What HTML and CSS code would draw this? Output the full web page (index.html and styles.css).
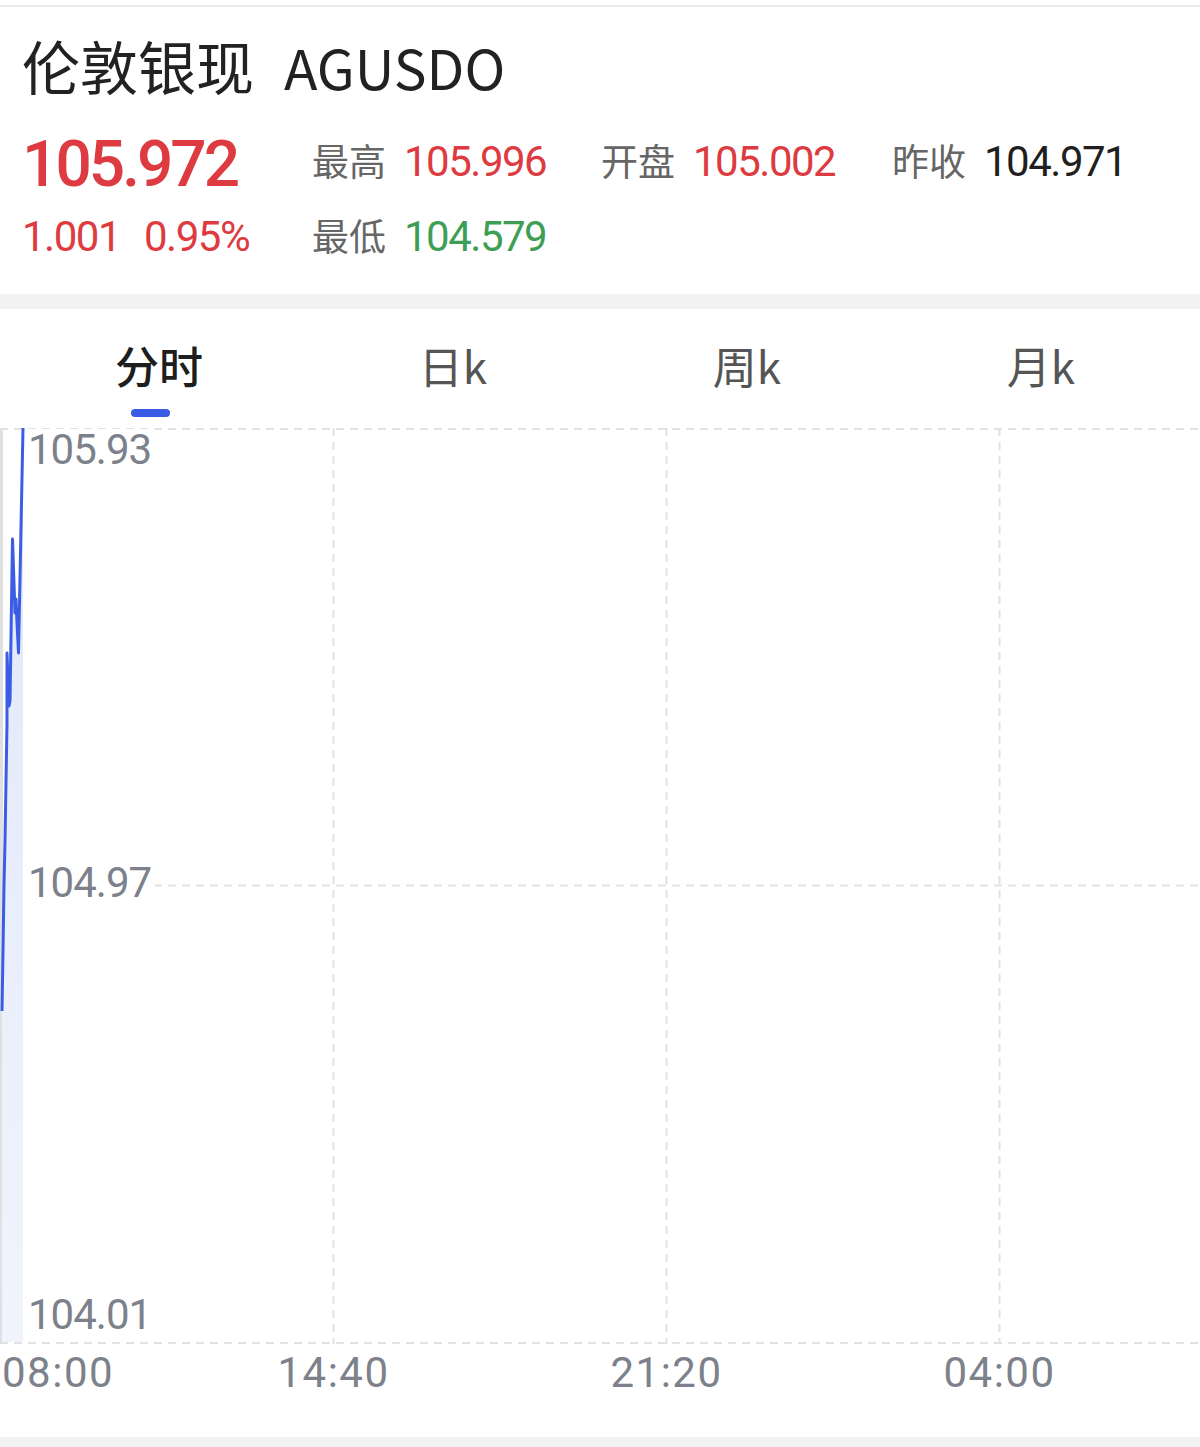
FILE: index.html
```html
<!DOCTYPE html>
<html lang="zh-CN">
<head>
<meta charset="utf-8">
<title>伦敦银现 AGUSDO</title>
<link rel="stylesheet" href="styles.css">
</head>
<body>
<div class="top-rule"></div>
<header class="quote">
  <h1 class="title"><span class="name">伦敦银现</span><span class="code">AGUSDO</span></h1>
  <div class="stats">
    <div class="price up">105.972</div>
    <div class="stat"><span class="label">最高</span><span class="val up">105.996</span></div>
    <div class="stat"><span class="label">开盘</span><span class="val up">105.002</span></div>
    <div class="stat"><span class="label">昨收</span><span class="val flat">104.971</span></div>
    <div class="change up"><span class="chg">1.001</span><span class="pct">0.95%</span></div>
    <div class="stat"><span class="label">最低</span><span class="val down">104.579</span></div>
  </div>
</header>
<div class="band"></div>
<section class="chart-card">
  <nav class="tabs">
    <div class="tab active"><span class="tab-text">分时</span><span class="tab-bar"></span></div>
    <div class="tab"><span class="tab-text">日k</span></div>
    <div class="tab"><span class="tab-text">周k</span></div>
    <div class="tab"><span class="tab-text">月k</span></div>
  </nav>
  <div class="chart">
    <svg class="chart-svg" width="1200" height="916" viewBox="0 0 1200 916" xmlns="http://www.w3.org/2000/svg">
      <defs>
        <linearGradient id="fillGrad" x1="0" y1="0" x2="0" y2="1">
          <stop offset="0" stop-color="#dfe7f9"/>
          <stop offset="1" stop-color="#f1f4fc"/>
        </linearGradient>
      </defs>
      <g stroke="#e2e2e2" stroke-width="2" stroke-dasharray="8 6" fill="none">
        <line x1="0" y1="1" x2="1200" y2="1"/>
        <line x1="0" y1="457.5" x2="1200" y2="457.5"/>
        <line x1="0" y1="915" x2="1200" y2="915"/>
        <line x1="333.5" y1="0" x2="333.5" y2="916"/>
        <line x1="666.5" y1="0" x2="666.5" y2="916"/>
        <line x1="999.5" y1="0" x2="999.5" y2="916"/>
      </g>
      <rect x="0" y="0" width="3" height="916" fill="#e0e0e0"/>
      <polygon fill="url(#fillGrad)" points="2,583 3,523 4,457 5,413 6,353 7,295 7,225 9,278 10,273 12.5,111 15,185 16,171 17,195 18.5,225 23,0 23,914 2,914"/>
      <polyline fill="none" stroke="#3b5de6" stroke-width="3" stroke-linejoin="round" points="2,583 3,523 4,457 5,413 6,353 7,295 7,225 9,278 10,273 12.5,111 15,185 16,171 17,195 18.5,225 23,0"/>
    </svg>
    <span class="ylabel y-top">105.93</span>
    <span class="ylabel y-mid">104.97</span>
    <span class="ylabel y-bot">104.01</span>
  </div>
  <div class="axis">
    <span class="tlabel t0">08:00</span>
    <span class="tlabel t1">14:40</span>
    <span class="tlabel t2">21:20</span>
    <span class="tlabel t3">04:00</span>
  </div>
</section>
<div class="band band-bottom"></div>
</body>
</html>
```

FILE: styles.css
```css
* { box-sizing: border-box; }

html, body {
  margin: 0;
  padding: 0;
  background: #ffffff;
}

body {
  width: 1200px;
  height: 1447px;
  overflow: hidden;
  font-family: "Noto Sans CJK SC", "Noto Sans", sans-serif;
  color: #222222;
}

.top-rule {
  margin-top: 5px;
  height: 2px;
  background: #ebebeb;
}

.quote {
  padding: 29px 0 17px 0;
}

.title {
  margin: 0 0 0 22px;
  font-weight: 400;
  font-size: 58px;
  line-height: 58px;
  color: #222222;
  white-space: nowrap;
}

.title .code {
  margin-left: 30px;
  font-family: "Noto Sans CJK SC", "Noto Sans", sans-serif;
  font-size: 55px;
}

.stats {
  margin-top: 32px;
  padding-left: 22px;
  display: grid;
  grid-template-columns: 290px 289px 291px 1fr;
  grid-template-rows: 75px 75px;
}

.up { color: #dd3b41; }
.down { color: #3f9e55; }
.flat { color: #1f1f1f; }

.price {
  font-family: Roboto, "Liberation Sans", sans-serif;
  font-weight: 500;
  font-size: 64px;
  line-height: 75px;
  letter-spacing: -3px;
  white-space: nowrap;
}

.stat, .change {
  padding-top: 9px;
  line-height: 66px;
  white-space: nowrap;
}

.label {
  font-family: "Noto Sans CJK SC", sans-serif;
  font-size: 37px;
  line-height: 1;
  color: #666666;
  margin-right: 18px;
}

.val, .chg, .pct {
  font-family: Roboto, "Liberation Sans", sans-serif;
  font-size: 42px;
  line-height: 1;
  letter-spacing: -1.5px;
}

.chg { margin-right: 24px; }

.band {
  height: 15px;
  background: #f2f2f2;
}

.band-bottom {
  height: 11px;
}

.chart-card {
  background: #ffffff;
}

.tabs {
  display: grid;
  grid-template-columns: repeat(4, 1fr);
  padding: 0 12px;
  height: 119px;
}

.tab {
  display: flex;
  flex-direction: column;
  align-items: center;
  padding-top: 34px;
}

.tab-text {
  font-size: 44px;
  line-height: 44px;
  color: #555555;
  white-space: nowrap;
}

.tab.active .tab-text {
  color: #1e1e1e;
  font-weight: 500;
}

.tab-bar {
  display: block;
  width: 39px;
  height: 8px;
  margin-top: 22px;
  margin-left: -18px;
  border-radius: 4px;
  background: #3a5be3;
}

.chart {
  position: relative;
  height: 916px;
}

.chart-svg {
  display: block;
}

.ylabel {
  position: absolute;
  left: 28px;
  padding-right: 4px;
  font-family: Roboto, "Liberation Sans", sans-serif;
  font-size: 42px;
  line-height: 42px;
  letter-spacing: -1px;
  color: #7c818b;
  background: #ffffff;
}

.y-top { top: 1px; }
.y-mid { top: 434px; }
.y-bot { top: 866px; }

.axis {
  position: relative;
  height: 93px;
}

.tlabel {
  position: absolute;
  top: 8px;
  font-family: Roboto, "Liberation Sans", sans-serif;
  font-size: 42px;
  line-height: 42px;
  letter-spacing: 1.5px;
  color: #7c818b;
  white-space: nowrap;
}

.t0 { left: 2px; }
.t1 { left: 333.5px; transform: translateX(-50%); }
.t2 { left: 666.5px; transform: translateX(-50%); }
.t3 { left: 999.5px; transform: translateX(-50%); }
```
